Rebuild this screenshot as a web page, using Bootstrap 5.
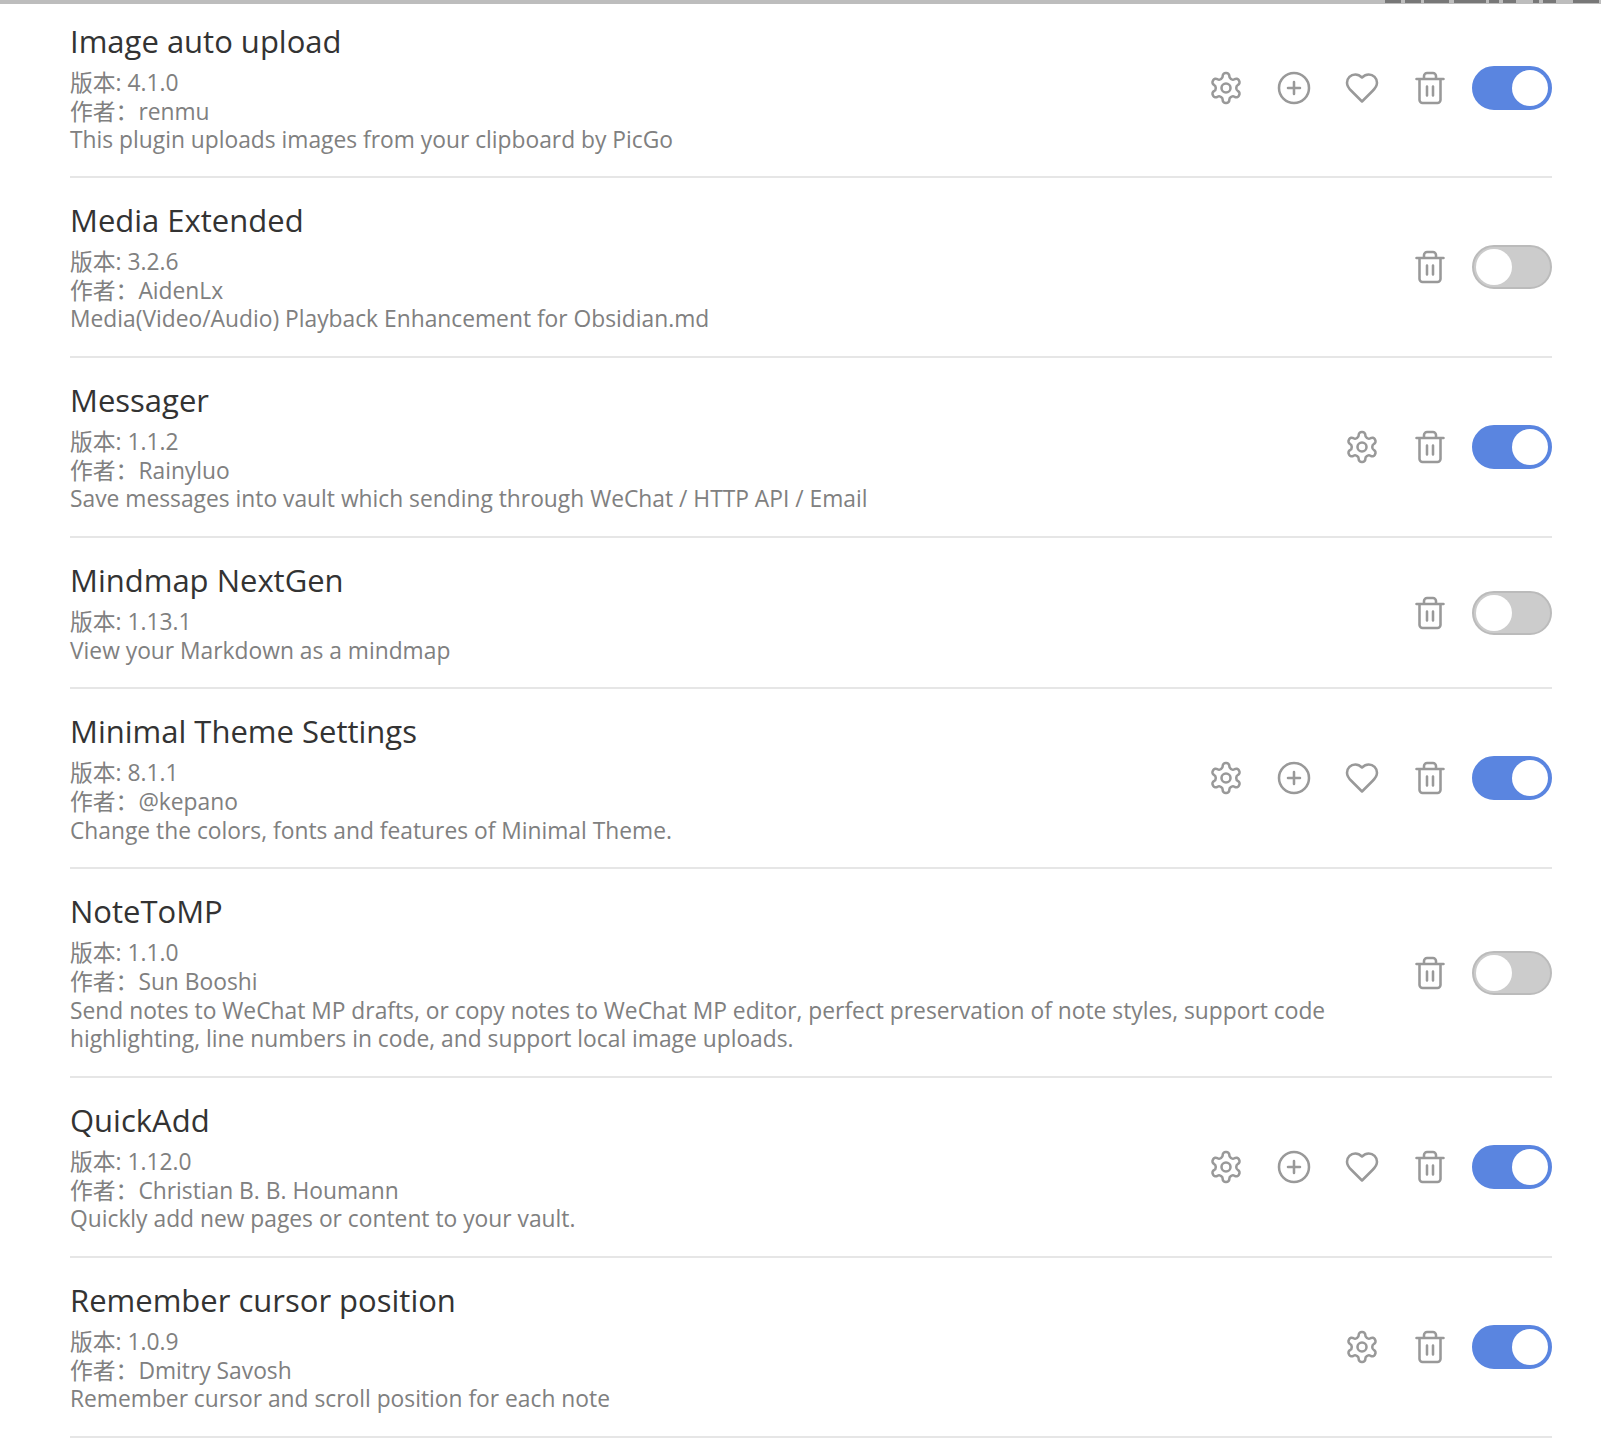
<!DOCTYPE html>
<html lang="zh">
<head>
    <meta charset="UTF-8">
    <meta name="viewport" content="width=device-width, initial-scale=1.0">
    <title>Plugins</title>
    <link rel="stylesheet" href="https://cdn.jsdelivr.net/npm/bootstrap@5.3.0/dist/css/bootstrap.min.css">
    <style>
        body { background: #fff; font-family: "Open Sans", "Noto Sans CJK SC", sans-serif; overflow: hidden; }
        .top-strip { height: 4px; background: #bdbdbd; }
        .strip-text { width: 216px; height: 3px; background: linear-gradient(90deg, #777 0 16px, transparent 16px 20px, #777 20px 36px, transparent 36px 39px, #777 39px 64px, transparent 64px 69px, #777 69px 101px, transparent 101px 104px, #777 104px 114px, transparent 114px 118px, #777 118px 131px, transparent 131px 148px, #777 148px 154px, transparent 154px 158px, #777 158px 171px, transparent 171px 188px, #777 188px 214px, transparent 214px); }
        .plugin-list { margin: 0 49px 0 70px; }
        .plugin-row { padding: 22px 0 21.9px; border-bottom: 2px solid #e6e6e6; }
        .plugin-row:first-child { padding-top: 17px; padding-bottom: 20.9px; }
        .plugin-title { font-size: 31px; line-height: 40px; color: #333; margin-bottom: 8px; }
        .plugin-meta { font-size: 22.8px; line-height: 28.7px; color: #808080; }
        .plugin-info { width: 1270px; }
        .tool-icon { width: 36px; height: 36px; fill: none; stroke: #999; stroke-width: 1.7; stroke-linecap: round; stroke-linejoin: round; }
        .tool-set { gap: 32px; }
        .switch-box.form-switch { padding: 0; margin: 0 0 0 24px; min-height: 0; display: flex; }
        .switch-box.form-switch .form-check-input { width: 80px; height: 44px; margin: 0; float: none; border: 2px solid #bbb; border-radius: 22px; background-color: #ccc; background-position: left center; background-image: url("data:image/svg+xml,%3csvg xmlns='http://www.w3.org/2000/svg' viewBox='-4 -4 8 8'%3e%3ccircle r='3.6' fill='%23fff'/%3e%3c/svg%3e"); }
        .switch-box.form-switch .form-check-input:checked { background-color: #5a85e0; border-color: #5a85e0; background-position: right center; }
    </style>
</head>
<body>
    <svg width="0" height="0" class="d-block">
        <symbol id="i-gear" viewBox="0 0 24 24"><path d="M12.22 2h-.44a2 2 0 0 0-2 2v.18a2 2 0 0 1-1 1.73l-.43.25a2 2 0 0 1-2 0l-.15-.08a2 2 0 0 0-2.73.73l-.22.38a2 2 0 0 0 .73 2.73l.15.1a2 2 0 0 1 1 1.72v.51a2 2 0 0 1-1 1.74l-.15.09a2 2 0 0 0-.73 2.73l.22.38a2 2 0 0 0 2.73.73l.15-.08a2 2 0 0 1 2 0l.43.25a2 2 0 0 1 1 1.73V20a2 2 0 0 0 2 2h.44a2 2 0 0 0 2-2v-.18a2 2 0 0 1 1-1.73l.43-.25a2 2 0 0 1 2 0l.15.08a2 2 0 0 0 2.73-.73l.22-.39a2 2 0 0 0-.73-2.73l-.15-.08a2 2 0 0 1-1-1.74v-.5a2 2 0 0 1 1-1.74l.15-.09a2 2 0 0 0 .73-2.73l-.22-.38a2 2 0 0 0-2.73-.73l-.15.08a2 2 0 0 1-2 0l-.43-.25a2 2 0 0 1-1-1.73V4a2 2 0 0 0-2-2z"/><circle cx="12" cy="12" r="3"/></symbol>
        <symbol id="i-plus" viewBox="0 0 24 24"><circle cx="12" cy="12" r="10"/><path d="M8 12h8M12 8v8"/></symbol>
        <symbol id="i-heart" viewBox="0 0 24 24"><path d="M19 14c1.49-1.46 3-3.21 3-5.5A5.5 5.5 0 0 0 16.5 3c-1.76 0-3 .5-4.5 2-1.5-1.5-2.74-2-4.5-2A5.5 5.5 0 0 0 2 8.5c0 2.3 1.5 4.05 3 5.5l7 7Z"/></symbol>
        <symbol id="i-trash" viewBox="0 0 24 24"><path d="M3 6h18M19 6v14c0 1-1 2-2 2H7c-1 0-2-1-2-2V6M8 6V4c0-1 1-2 2-2h4c1 0 2 1 2 2v2M10 11v6M14 11v6"/></symbol>
    </svg>
    <div class="top-strip d-flex justify-content-end"><div class="strip-text"></div></div>
    <div class="plugin-list">
        <div class="plugin-row d-flex justify-content-between align-items-center">
            <div class="plugin-info">
                <div class="plugin-title">Image auto upload</div>
                <div class="plugin-meta">版本: 4.1.0</div>
                <div class="plugin-meta">作者：renmu</div>
                <div class="plugin-meta">This plugin uploads images from your clipboard by PicGo</div>
            </div>
            <div class="d-flex align-items-center">
                <div class="tool-set d-flex">
                    <svg class="tool-icon"><use href="#i-gear"/></svg>
                    <svg class="tool-icon"><use href="#i-plus"/></svg>
                    <svg class="tool-icon"><use href="#i-heart"/></svg>
                    <svg class="tool-icon"><use href="#i-trash"/></svg>
                </div>
                <div class="form-check form-switch switch-box"><input class="form-check-input" type="checkbox" checked></div>
            </div>
        </div>
        <div class="plugin-row d-flex justify-content-between align-items-center">
            <div class="plugin-info">
                <div class="plugin-title">Media Extended</div>
                <div class="plugin-meta">版本: 3.2.6</div>
                <div class="plugin-meta">作者：AidenLx</div>
                <div class="plugin-meta">Media(Video/Audio) Playback Enhancement for Obsidian.md</div>
            </div>
            <div class="d-flex align-items-center">
                <div class="tool-set d-flex">
                    <svg class="tool-icon"><use href="#i-trash"/></svg>
                </div>
                <div class="form-check form-switch switch-box"><input class="form-check-input" type="checkbox"></div>
            </div>
        </div>
        <div class="plugin-row d-flex justify-content-between align-items-center">
            <div class="plugin-info">
                <div class="plugin-title">Messager</div>
                <div class="plugin-meta">版本: 1.1.2</div>
                <div class="plugin-meta">作者：Rainyluo</div>
                <div class="plugin-meta">Save messages into vault which sending through WeChat / HTTP API / Email</div>
            </div>
            <div class="d-flex align-items-center">
                <div class="tool-set d-flex">
                    <svg class="tool-icon"><use href="#i-gear"/></svg>
                    <svg class="tool-icon"><use href="#i-trash"/></svg>
                </div>
                <div class="form-check form-switch switch-box"><input class="form-check-input" type="checkbox" checked></div>
            </div>
        </div>
        <div class="plugin-row d-flex justify-content-between align-items-center">
            <div class="plugin-info">
                <div class="plugin-title">Mindmap NextGen</div>
                <div class="plugin-meta">版本: 1.13.1</div>
                <div class="plugin-meta">View your Markdown as a mindmap</div>
            </div>
            <div class="d-flex align-items-center">
                <div class="tool-set d-flex">
                    <svg class="tool-icon"><use href="#i-trash"/></svg>
                </div>
                <div class="form-check form-switch switch-box"><input class="form-check-input" type="checkbox"></div>
            </div>
        </div>
        <div class="plugin-row d-flex justify-content-between align-items-center">
            <div class="plugin-info">
                <div class="plugin-title">Minimal Theme Settings</div>
                <div class="plugin-meta">版本: 8.1.1</div>
                <div class="plugin-meta">作者：@kepano</div>
                <div class="plugin-meta">Change the colors, fonts and features of Minimal Theme.</div>
            </div>
            <div class="d-flex align-items-center">
                <div class="tool-set d-flex">
                    <svg class="tool-icon"><use href="#i-gear"/></svg>
                    <svg class="tool-icon"><use href="#i-plus"/></svg>
                    <svg class="tool-icon"><use href="#i-heart"/></svg>
                    <svg class="tool-icon"><use href="#i-trash"/></svg>
                </div>
                <div class="form-check form-switch switch-box"><input class="form-check-input" type="checkbox" checked></div>
            </div>
        </div>
        <div class="plugin-row d-flex justify-content-between align-items-center">
            <div class="plugin-info">
                <div class="plugin-title">NoteToMP</div>
                <div class="plugin-meta">版本: 1.1.0</div>
                <div class="plugin-meta">作者：Sun Booshi</div>
                <div class="plugin-meta">Send notes to WeChat MP drafts, or copy notes to WeChat MP editor, perfect preservation of note styles, support code highlighting, line numbers in code, and support local image uploads.</div>
            </div>
            <div class="d-flex align-items-center">
                <div class="tool-set d-flex">
                    <svg class="tool-icon"><use href="#i-trash"/></svg>
                </div>
                <div class="form-check form-switch switch-box"><input class="form-check-input" type="checkbox"></div>
            </div>
        </div>
        <div class="plugin-row d-flex justify-content-between align-items-center">
            <div class="plugin-info">
                <div class="plugin-title">QuickAdd</div>
                <div class="plugin-meta">版本: 1.12.0</div>
                <div class="plugin-meta">作者：Christian B. B. Houmann</div>
                <div class="plugin-meta">Quickly add new pages or content to your vault.</div>
            </div>
            <div class="d-flex align-items-center">
                <div class="tool-set d-flex">
                    <svg class="tool-icon"><use href="#i-gear"/></svg>
                    <svg class="tool-icon"><use href="#i-plus"/></svg>
                    <svg class="tool-icon"><use href="#i-heart"/></svg>
                    <svg class="tool-icon"><use href="#i-trash"/></svg>
                </div>
                <div class="form-check form-switch switch-box"><input class="form-check-input" type="checkbox" checked></div>
            </div>
        </div>
        <div class="plugin-row d-flex justify-content-between align-items-center">
            <div class="plugin-info">
                <div class="plugin-title">Remember cursor position</div>
                <div class="plugin-meta">版本: 1.0.9</div>
                <div class="plugin-meta">作者：Dmitry Savosh</div>
                <div class="plugin-meta">Remember cursor and scroll position for each note</div>
            </div>
            <div class="d-flex align-items-center">
                <div class="tool-set d-flex">
                    <svg class="tool-icon"><use href="#i-gear"/></svg>
                    <svg class="tool-icon"><use href="#i-trash"/></svg>
                </div>
                <div class="form-check form-switch switch-box"><input class="form-check-input" type="checkbox" checked></div>
            </div>
        </div>
    </div>
    <script src="https://cdn.jsdelivr.net/npm/bootstrap@5.3.0/dist/js/bootstrap.bundle.min.js"></script>
</body>
</html>
